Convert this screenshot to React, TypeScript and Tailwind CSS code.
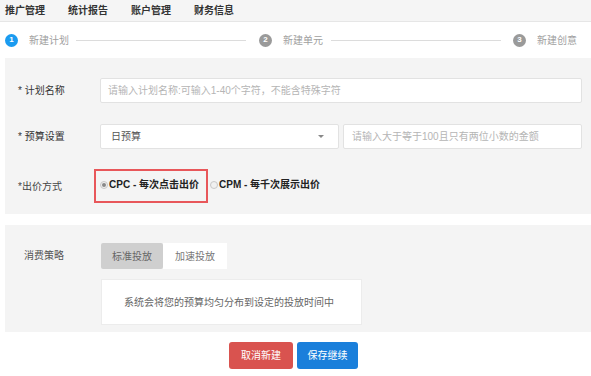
import React from "react";

const font = { fontFamily: '"Liberation Sans", "Noto Sans CJK SC", sans-serif' };

function Step({ n, label, active }: { n: number; label: string; active?: boolean }) {
  return (
    <div className="flex items-center shrink-0">
      <span
        className={
          "w-[13px] h-[13px] rounded-full text-white text-[8px] font-bold flex items-center justify-center " +
          (active ? "bg-[#1a9bf0]" : "bg-[#9a9a9a]")
        }
      >
        {n}
      </span>
      <span className="ml-[11px] text-[10px] text-[#a0a0a0]">{label}</span>
    </div>
  );
}

function Radio({ checked }: { checked?: boolean }) {
  return (
    <span className="w-[8px] h-[8px] rounded-full border border-[#c8c8c8] bg-[#f0f0f0] flex items-center justify-center shrink-0">
      {checked && <span className="w-[4px] h-[4px] rounded-full bg-[#888]" />}
    </span>
  );
}

export default function App() {
  return (
    <div className="w-[591px] h-[376px] bg-white overflow-hidden text-[#333]" style={font}>
      {/* top nav */}
      <div className="h-[22px] bg-[#f5f5f5] border-b border-[#e6e6e6] flex items-center pl-[5px] gap-[23px] text-[10px] font-bold text-[#333]">
        <span>推广管理</span>
        <span>统计报告</span>
        <span>账户管理</span>
        <span>财务信息</span>
      </div>

      {/* steps */}
      <div className="h-[36px] flex items-center pl-[5px] pr-[14px]">
        <Step n={1} label="新建计划" active />
        <div className="flex-1 h-px bg-[#dcdcdc] ml-[7px] mr-[13px]" />
        <Step n={2} label="新建单元" />
        <div className="flex-1 h-px bg-[#dcdcdc] ml-[8px] mr-[12px]" />
        <Step n={3} label="新建创意" />
      </div>

      {/* plan panel */}
      <div className="ml-[5px] bg-[#f4f4f4] h-[156px] pt-[20px] pl-[13px] pr-[9px] flex flex-col">
        <div className="flex items-center h-[25px]">
          <span className="w-[82px] text-[10px]">* 计划名称</span>
          <div className="flex-1 h-[25px] bg-white border border-[#e2e2e2] rounded-[2px] flex items-center px-[7px] text-[10px] text-[#b5b5b5]">
            请输入计划名称:可输入1-40个字符，不能含特殊字符
          </div>
        </div>
        <div className="flex items-center h-[25px] mt-[21px]">
          <span className="w-[82px] text-[10px]">* 预算设置</span>
          <div className="w-[239px] h-[25px] bg-white border border-[#e2e2e2] rounded-[2px] flex items-center justify-between pl-[10px] pr-[14px] text-[10px] text-[#555]">
            <span>日预算</span>
            <span className="w-0 h-0 border-l-[3px] border-r-[3px] border-t-[3px] border-l-transparent border-r-transparent border-t-[#888]" />
          </div>
          <div className="flex-1 ml-[4px] h-[25px] bg-white border border-[#e2e2e2] rounded-[2px] flex items-center px-[8px] text-[10px] text-[#b5b5b5]">
            请输入大于等于100且只有两位小数的金额
          </div>
        </div>
        <div className="flex items-center mt-[20px]">
          <span className="w-[76px] text-[10px] text-[#444]">*出价方式</span>
          <div className="w-[114px] h-[34px] border-2 border-[#e8575a] flex items-start pt-[6px] pl-[4px]">
            <div className="flex items-center gap-[1px] text-[10px] font-bold text-[#222]">
              <Radio checked />
              <span>CPC - 每次点击出价</span>
            </div>
          </div>
          <div className="flex items-center self-start mt-[8px] ml-[2px] gap-[1px] text-[10px] font-bold text-[#222]">
            <Radio />
            <span>CPM - 每千次展示出价</span>
          </div>
        </div>
      </div>

      {/* strategy panel */}
      <div className="ml-[5px] mt-[11px] bg-[#f4f4f4] h-[107px] pt-[18px] flex">
        <span className="w-[96px] pl-[19px] pt-[5px] text-[10px] text-[#555]">消费策略</span>
        <div className="flex flex-col">
          <div className="flex h-[26px] text-[10px]">
            <span className="w-[62px] bg-[#cfcfcf] rounded-[2px] flex items-center justify-center text-[#666]">标准投放</span>
            <span className="w-[64px] bg-white flex items-center justify-center text-[#777]">加速投放</span>
          </div>
          <div className="mt-[10px] w-[261px] h-[46px] bg-white border border-[#ececec] flex items-center pl-[22px] text-[10px] text-[#666]">
            系统会将您的预算均匀分布到设定的投放时间中
          </div>
        </div>
      </div>

      {/* buttons */}
      <div className="flex pl-[229px] mt-[10px] gap-[4px]">
        <button className="w-[64px] h-[27px] rounded-[3px] bg-[#d9534f] text-white text-[10px]">取消新建</button>
        <button className="w-[61px] h-[27px] rounded-[3px] bg-[#1a7fdb] text-white text-[10px]">保存继续</button>
      </div>
    </div>
  );
}
